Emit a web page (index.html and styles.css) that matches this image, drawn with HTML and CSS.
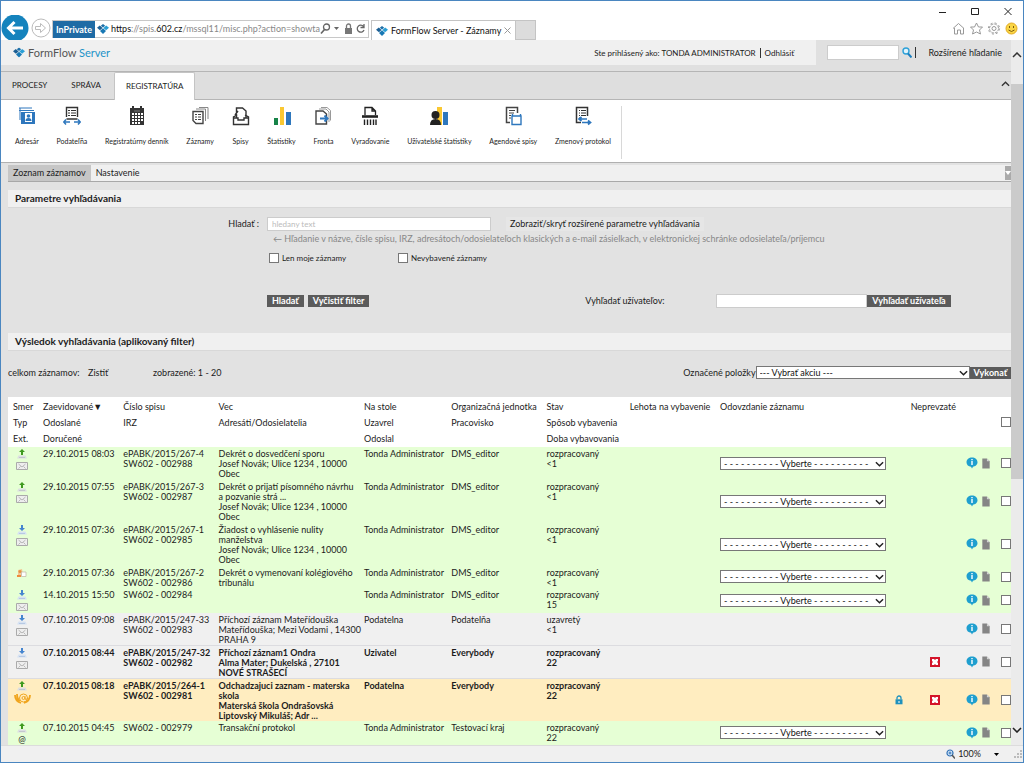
FILE: index.html
```html
<!DOCTYPE html>
<html lang="sk">
<head>
<meta charset="utf-8">
<title>FormFlow Server - Záznamy</title>
<link rel="stylesheet" href="styles.css">
</head>
<body>
<svg class="defs" aria-hidden="true">
  <symbol id="logo" viewBox="0 0 12 10"><path d="M6 0l2.200 1.800L6 3.600 3.800 1.800z" fill="#1d6fa8"/><path d="M2.800 1.600L5.600 4 2.900 6.200 0 3.800z" fill="#1c5f94"/><path d="M9.200 1.600L12 3.800 9.100 6.200 6.400 4z" fill="#2a9fd6"/><path d="M6 4.300l3 2.600L6 9.900 3 6.900z" fill="#1878b4"/></symbol>
  <symbol id="up" viewBox="0 0 10 10"><path d="M5 0l3 3H6v3H4V3H2z" fill="#3f9a1f"/><path d="M1.500 6.500h7L10 9.500H0z" fill="#dcdfe2"/><path d="M2 8.500h6" stroke="#b9bec4" stroke-width=".7"/></symbol>
  <symbol id="down" viewBox="0 0 10 10"><path d="M5 6L2 3h2V0h2v3h2z" fill="#4585cf"/><path d="M1.500 6.500h7L10 9.500H0z" fill="#d6e2f2"/><path d="M2 8.500h6" stroke="#a9bfdc" stroke-width=".7"/></symbol>
  <symbol id="mail" viewBox="0 0 12 10"><path d="M.5 1.500h11v7H.5z" fill="#eee" stroke="#aaa"/><path d="M2.500 3L6 6l3.500-3M2.500 7.500l2-2M9.500 7.500l-2-2" fill="none" stroke="#aaa" stroke-width=".8"/></symbol>
  <symbol id="bundle" viewBox="0 0 10 10"><path d="M1 2l4-1 1 6-5 1z" fill="#f3c795"/><circle cx="3" cy="3.500" r="1.500" fill="#e49443"/><path d="M4.500 4h4.500v4.500H4.500z" fill="#fff" stroke="#bdb3a5" stroke-width=".7"/><path d="M0 7h4v2H0z" fill="#ef8b3b"/></symbol>
  <symbol id="info" viewBox="0 0 12 12"><path d="M6 .5c3 0 5.500 2 5.500 4.700C11.500 8 9 9.500 7 9.700L6 11.500 5 9.700C2.500 9.500.5 8 .5 5.200.5 2.500 3 .5 6 .5z" fill="#1f9fcf"/><path d="M5.300 2h1.400v1.300H5.300zM5.300 4h1.400v4H5.300z" fill="#fff"/></symbol>
  <symbol id="doc" viewBox="0 0 8 12"><path d="M0 .5h5L8 3.500v8H0z" fill="#858585"/><path d="M5 .5L8 3.500H5z" fill="#d5d5d5"/></symbol>
  <symbol id="lock" viewBox="0 0 8 10"><path d="M2 4.500V3a2 2 0 014 0v1.500" fill="none" stroke="#1e91bd" stroke-width="1.300"/><path d="M.5 4.300h7v5h-7z" fill="#1e91bd"/><path d="M3.500 6h1v2h-1z" fill="#fff"/></symbol>
  <symbol id="cross" viewBox="0 0 10 10"><path d="M0 0h10v10H0z" fill="#d4142a"/><path d="M2 2h2l1 1 1-1h2v2L7 5l1 1v2H6L5 7 4 8H2V6l1-1-1-1z" fill="#fff"/></symbol>
  <symbol id="chev" viewBox="0 0 10 6"><path d="M1 1l4 4 4-4" fill="none" stroke="#222" stroke-width="1.600"/></symbol>
  <symbol id="chevup" viewBox="0 0 10 6"><path d="M1 5l4-4 4 4" fill="none" stroke="#333" stroke-width="1.500"/></symbol>
</svg>
<div class="window">
  <header class="chrome">
    <div class="nav">
      <button class="round" aria-label="Späť"><svg width="28" height="25" viewBox="0 0 28 25"><circle cx="14" cy="13" r="13.500" fill="#1583bd"/><path d="M22 13H8M13.500 7L7.500 13l6 6" fill="none" stroke="#fff" stroke-width="3"/></svg></button>
      <button class="round" aria-label="Vpred"><svg width="20" height="20" viewBox="0 0 20 20" fill="none" stroke="#bbb"><circle cx="10" cy="10" r="9"/><path d="M4.500 8.500h5v-3l5 4.500-5 4.500v-3h-5z"/></svg></button>
      <div class="address">
        <span class="private">InPrivate</span>
        <svg width="12" height="10"><use href="#logo"/></svg>
        <span class="url"><b>https</b>://spis.<b>602.cz</b>/mssql11/misc.php?action=showta</span>
        <svg width="46" height="12" viewBox="0 0 46 12" fill="none" stroke="#666"><circle cx="6.500" cy="4" r="3" stroke-width="1.300"/><path d="M4.500 6.500L1 10.500" stroke-width="1.600"/><path d="M14 4h5l-2.500 3z" fill="#666" stroke="none"/><path d="M25 5h7v6h-7z" fill="#777" stroke="none"/><path d="M26.500 5V3a2 2 0 014 0v2" stroke="#777" stroke-width="1.300"/><path d="M43.500 3.500A3.500 3.500 0 1044 7M44 1v3.500H40.500" stroke-width="1.300"/></svg>
      </div>
      <div class="tab"><svg width="12" height="10"><use href="#logo"/></svg><span>FormFlow Server - Záznamy</span><svg class="close" width="7" height="7" viewBox="0 0 7 7"><path d="M.5.5l6 6M6.500.5l-6 6" stroke="#999"/></svg></div>
      <button class="newtab" aria-label="Nová karta"></button>
    </div>
    <div class="wincontrols">
      <svg width="74" height="9" viewBox="0 0 74 9" fill="none" stroke="#222"><path d="M1 5.500h7M33.500 1.500h7v6h-7zM66.500 1l7 7M73.500 1l-7 7"/></svg>
      <svg width="66" height="13" viewBox="0 0 66 13" fill="none" stroke="#999"><path d="M1 6.500L6.500 1.500 12 6.500M2.500 6v6h3V8h3v4h3V6M18.500 5h4L24.500 1l2 4h4l-3 3 1 4-4-2-4 2 1-4z"/><circle cx="42" cy="6.500" r="4.500" stroke-dasharray="2.500 1"/><circle cx="42" cy="6.500" r="5.600" stroke-dasharray="2 2.400"/><circle cx="42" cy="6.500" r="2"/><circle cx="59.500" cy="6.500" r="5.500" fill="#f9d545" stroke="#e3aa22"/><path d="M57.500 4v2M61.500 4v2M56.500 8q3 3 6 0" stroke="#7a5a10"/></svg>
    </div>
  </header>
  <div class="viewport">
    <div class="page">
      <div class="brandbar">
        <div class="brand"><svg width="12" height="11" viewBox="0 0 12 10"><use href="#logo"/></svg><span>FormFlow <i>Server</i></span></div>
        <div class="user"><span>Ste prihlásený ako: TONDA ADMINISTRATOR</span><a href="#">Odhlásiť</a></div>
        <form class="quick"><input type="text" aria-label="Hľadať"><button type="button" aria-label="Hľadaj"><svg width="10" height="11" viewBox="0 0 10 11" fill="none"><circle cx="4" cy="4" r="3" fill="#e3f4fc" stroke="#2da1d8" stroke-width="1.400"/><path d="M6 6.500l3.500 4" stroke="#1c7fc0" stroke-width="2"/></svg></button><a href="#">Rozšírené hľadanie</a></form>
      </div>
      <nav class="tabs"><a href="#">PROCESY</a><a href="#">SPRÁVA</a><a href="#" class="active">REGISTRATÚRA</a><button aria-label="Zbaliť"><svg width="9" height="6"><use href="#chevup"/></svg></button></nav>
      <div class="ribbon">
        <div class="tools">
        <a href="#"><svg viewBox="0 0 18 20"><path d="M1 2h13M1 4.500h15M2 2v12" stroke="#2e77bd" fill="none"/><path d="M3 6h14v12H3z" fill="#2e77bd"/><path d="M7 7h7v9H7z" fill="#fff"/><circle cx="10.500" cy="10" r="1.800" fill="#2e77bd"/><path d="M7.500 15q0-3 3-3t3 3z" fill="#2e77bd"/></svg>Adresár</a>
        <a href="#"><svg viewBox="0 0 18 20" fill="none" stroke="#333"><path d="M3.500 11V1.500h11V11M3.500 13h11" stroke-width="1.400"/><path d="M5 4.500h2M8 4.500h5M5 7h2M8 7h5M5 9.500h2M8 9.500h5"/><path d="M1 16h6M11 16h6M3 13.500L.8 16 3 18.500M15 13.500l2.200 2.500L15 18.500" stroke="#2e77bd" stroke-width="1.500"/></svg>Podateľňa</a>
        <a href="#"><svg viewBox="0 0 18 20"><path d="M2 2h14v17H2z" fill="#333"/><path d="M4 7h2v2H4zM7 7h2v2H7zM10 7h2v2h-2zM13 7h2v2h-2zM4 10h2v2H4zM7 10h2v2H7zM10 10h2v2h-2zM13 10h2v2h-2zM4 13h2v2H4zM7 13h2v2H7zM10 13h2v2h-2zM13 13h2v2h-2zM4 16h2v2H4zM7 16h2v2H7zM10 16h2v2h-2z" fill="#fff"/><path d="M5 0v4M13 0v4" stroke="#333" stroke-width="2"/><path d="M6 5h6" stroke="#777"/></svg>Registratúrny denník</a>
        <a href="#"><svg viewBox="0 0 18 20" fill="none" stroke="#444"><path d="M2 5.500h10v12H5l-3-3z" stroke-width="1.400"/><path d="M5 3h9.500v12M8 1.500h9V13" stroke="#888"/><path d="M4 8.500h2M7 8.500h3M4 11h2M7 11h3M4 13.500h2M7 13.500h3"/></svg>Záznamy</a>
        <a href="#"><svg viewBox="0 0 18 20" fill="none" stroke="#333" stroke-width="1.400"><path d="M5 9L1.500 11v7.500h15V11L13 9"/><path d="M4.500 12V2h6L14 5v7M2 12h4v2h6v-2h4M6 5l-3 4"/></svg>Spisy</a>
        <a href="#"><svg viewBox="0 0 18 20"><path d="M1 12h4v7H1z" fill="#178348"/><path d="M7 1h4v18H7z" fill="#fac832"/><path d="M13 6h5v13h-5z" fill="#2e77bd"/></svg>Štatistiky</a>
        <a href="#"><svg viewBox="0 0 18 20" fill="none" stroke="#444"><path d="M7 1.500h6l3.500 3v10M5 3h7l3 3v10" stroke="#999"/><path d="M2 5h7l3.500 3v10H2z" fill="#fff" stroke-width="1.400"/><path d="M6 12.500h7M10.500 9.500l3 3-3 3" stroke="#2e77bd" stroke-width="2"/></svg>Fronta</a>
        <a href="#"><svg viewBox="0 0 18 20" fill="none" stroke="#222"><path d="M4 9V1.500h7L14.500 5v4M11 1.500V5h3" stroke-width="1.300"/><path d="M1 10.500h16" stroke-width="2.600"/><path d="M3.500 13.500V19M6.500 13.500V19M9.500 13.500V19M12.500 13.500V19M15 13.500V19" stroke-width="1.400"/></svg>Vyraďovanie</a>
        <a href="#"><svg viewBox="0 0 18 20"><path d="M7 1h5v18H7z" fill="#fac832"/><path d="M13 6h5v13h-5z" fill="#2e77bd"/><circle cx="5.500" cy="9" r="4" fill="#222"/><path d="M0 19q0-6 5.500-6T11 19z" fill="#222"/></svg>Užívatelské štatistiky</a>
        <a href="#"><svg viewBox="0 0 18 20" fill="none" stroke="#444"><path d="M6 16.500H2.500V1.500h11V7" stroke-width="1.500"/><path d="M5 4.500h6M5 7h5M5 9.500h2M5 12h2"/><path d="M8 10h9v8.500H8zM8.500 8v2M16.500 8v2" fill="#fff" stroke="#2e77bd" stroke-width="1.400"/></svg>Agendové spisy</a>
        <a href="#"><svg viewBox="0 0 18 20" fill="none" stroke="#333"><path d="M7 16.500H2.500V1.500h11V10" stroke-width="1.500"/><path d="M5 4.500h1M7 4.500h5M5 7h1M7 7h5M5 9.500h1M7 9.500h5M5 12h1"/><path d="M5 13h8M8 16.500h8M7.500 11L5 13l2.500 2M14 14.500l2.500 2-2.500 2" stroke="#2e77bd" stroke-width="1.700"/></svg>Zmenový protokol</a>
        </div>
      </div>
      <main class="content">
        <nav class="subtabs"><a href="#" class="active">Zoznam záznamov</a><a href="#">Nastavenie</a><button aria-label="Ponuka"><svg width="6" height="14" viewBox="0 0 6 14"><path d="M0 0h6v14H0z" fill="#aaa"/><path d="M0 5h6l-3 4z" fill="#fff"/></svg></button></nav>
        <h2>Parametre vyhľadávania</h2>
        <form class="search">
          <div class="line"><label class="name" for="q">Hladať :</label><input id="q" class="query" type="text" placeholder="hledany text"><button type="button" class="plain">Zobraziť/skryť rozšírené parametre vyhľadávania</button></div>
          <p class="hint">← Hľadanie v názve, čísle spisu, IRZ, adresátoch/odosielateľoch klasických a e-mail zásielkach, v elektronickej schránke odosielateľa/príjemcu</p>
          <div class="checks"><label><input type="checkbox">Len moje záznamy</label><label><input type="checkbox">Nevybavené záznamy</label></div>
          <div class="actions"><button type="button" class="dark">Hladať</button><button type="button" class="dark">Vyčistiť filter</button><label for="u">Vyhľadať užívateľov:</label><input id="u" type="text"><button type="button" class="dark">Vyhľadať užívateľa</button></div>
        </form>
        <h2>Výsledok vyhľadávania (aplikovaný filter)</h2>
        <div class="summary"><span class="total">celkom záznamov:</span><a href="#">Zistiť</a><span class="shown">zobrazené: 1 - 20</span><label for="act">Označené položky</label><span class="pick wide"><select id="act"><option>--- Vybrať akciu ---</option></select><svg width="9" height="6"><use href="#chev"/></svg></span><button type="button" class="dark">Vykonať</button></div>
        <table>
          <colgroup><col class="c1"><col class="c2"><col class="c3"><col class="c4"><col class="c5"><col class="c6"><col class="c7"><col class="c8"><col class="c9"><col class="c10"><col class="c11"><col class="c12"><col class="c13"></colgroup>
          <thead><tr><th>Smer<br>Typ<br>Ext.</th><th>Zaevidované▼<br>Odoslané<br>Doručené</th><th>Číslo spisu<br>IRZ</th><th>Vec<br>Adresáti/Odosielatelia</th><th>Na stole<br>Uzavrel<br>Odoslal</th><th>Organizačná jednotka<br>Pracovisko</th><th>Stav<br>Spôsob vybavenia<br>Doba vybavovania</th><th>Lehota na vybavenie</th><th>Odovzdanie záznamu</th><th></th><th>Neprevzaté</th><th></th><th class="mid box"><input type="checkbox" aria-label="Označiť všetko"></th></tr></thead>
          <tbody>
          <tr class="green"><td class="ic"><svg><use href="#up"/></svg><svg><use href="#mail"/></svg></td><td>29.10.2015 08:03</td><td>ePABK/2015/267-4<br>SW602 - 002988</td><td>Dekrét o dosvedčení sporu<br>Josef Novák; Ulice 1234 , 10000<br>Obec</td><td>Tonda Administrator</td><td>DMS_editor</td><td>rozpracovaný<br>&lt;1</td><td></td><td class="mid"><span class="pick"><select aria-label="Odovzdanie"><option>- - - - - - - - - - Vyberte - - - - - - - - - -</option></select><svg width="9" height="6"><use href="#chev"/></svg></span></td><td></td><td></td><td class="mid"><svg class="info"><use href="#info"/></svg><svg class="doc"><use href="#doc"/></svg></td><td class="mid box"><input type="checkbox" aria-label="Označiť"></td></tr>
          <tr class="green"><td class="ic"><svg><use href="#up"/></svg><svg><use href="#mail"/></svg></td><td>29.10.2015 07:55</td><td>ePABK/2015/267-3<br>SW602 - 002987</td><td>Dekrét o prijatí písomného návrhu<br>a pozvanie strá ...<br>Josef Novák; Ulice 1234 , 10000<br>Obec</td><td>Tonda Administrator</td><td>DMS_editor</td><td>rozpracovaný<br>&lt;1</td><td></td><td class="mid"><span class="pick"><select aria-label="Odovzdanie"><option>- - - - - - - - - - Vyberte - - - - - - - - - -</option></select><svg width="9" height="6"><use href="#chev"/></svg></span></td><td></td><td></td><td class="mid"><svg class="info"><use href="#info"/></svg><svg class="doc"><use href="#doc"/></svg></td><td class="mid box"><input type="checkbox" aria-label="Označiť"></td></tr>
          <tr class="green"><td class="ic"><svg><use href="#down"/></svg><svg><use href="#mail"/></svg></td><td>29.10.2015 07:36</td><td>ePABK/2015/267-1<br>SW602 - 002985</td><td>Žiadost o vyhlásenie nulity<br>manželstva<br>Josef Novák; Ulice 1234 , 10000<br>Obec</td><td>Tonda Administrator</td><td>DMS_editor</td><td>rozpracovaný<br>&lt;1</td><td></td><td class="mid"><span class="pick"><select aria-label="Odovzdanie"><option>- - - - - - - - - - Vyberte - - - - - - - - - -</option></select><svg width="9" height="6"><use href="#chev"/></svg></span></td><td></td><td></td><td class="mid"><svg class="info"><use href="#info"/></svg><svg class="doc"><use href="#doc"/></svg></td><td class="mid box"><input type="checkbox" aria-label="Označiť"></td></tr>
          <tr class="green tight"><td class="ic"><svg><use href="#bundle"/></svg></td><td>29.10.2015 07:36</td><td>ePABK/2015/267-2<br>SW602 - 002986</td><td>Dekrét o vymenovaní kolégiového<br>tribunálu</td><td>Tonda Administrator</td><td>DMS_editor</td><td>rozpracovaný<br>&lt;1</td><td></td><td class="mid"><span class="pick"><select aria-label="Odovzdanie"><option>- - - - - - - - - - Vyberte - - - - - - - - - -</option></select><svg width="9" height="6"><use href="#chev"/></svg></span></td><td></td><td></td><td class="mid"><svg class="info"><use href="#info"/></svg><svg class="doc"><use href="#doc"/></svg></td><td class="mid box"><input type="checkbox" aria-label="Označiť"></td></tr>
          <tr class="green"><td class="ic"><svg><use href="#down"/></svg><svg><use href="#mail"/></svg></td><td>14.10.2015 15:50</td><td>SW602 - 002984</td><td></td><td>Tonda Administrator</td><td>DMS_editor</td><td>rozpracovaný<br>15</td><td></td><td class="mid"><span class="pick"><select aria-label="Odovzdanie"><option>- - - - - - - - - - Vyberte - - - - - - - - - -</option></select><svg width="9" height="6"><use href="#chev"/></svg></span></td><td></td><td></td><td class="mid"><svg class="info"><use href="#info"/></svg><svg class="doc"><use href="#doc"/></svg></td><td class="mid box"><input type="checkbox" aria-label="Označiť"></td></tr>
          <tr class="grey tight"><td class="ic"><svg><use href="#down"/></svg><svg><use href="#mail"/></svg></td><td>07.10.2015 09:08</td><td>ePABK/2015/247-33<br>SW602 - 002983</td><td>Příchozí záznam Mateřídouška<br>Mateřídouška; Mezi Vodami , 14300<br>PRAHA 9</td><td>Podatelna</td><td>Podatelňa</td><td>uzavretý<br>&lt;1</td><td></td><td></td><td></td><td></td><td class="mid"><svg class="info"><use href="#info"/></svg><svg class="doc"><use href="#doc"/></svg></td><td class="mid box"><input type="checkbox" aria-label="Označiť"></td></tr>
          <tr class="grey tight unread"><td class="ic"><svg><use href="#down"/></svg><svg><use href="#mail"/></svg></td><td>07.10.2015 08:44</td><td>ePABK/2015/247-32<br>SW602 - 002982</td><td>Příchozí záznam1 Ondra<br>Alma Mater; Dukelská , 27101<br>NOVÉ STRAŠECÍ</td><td>Uzivatel</td><td>Everybody</td><td>rozpracovaný<br>22</td><td></td><td></td><td></td><td class="mid flag"><svg width="10" height="10"><use href="#cross"/></svg></td><td class="mid"><svg class="info"><use href="#info"/></svg><svg class="doc"><use href="#doc"/></svg></td><td class="mid box"><input type="checkbox" aria-label="Označiť"></td></tr>
          <tr class="amber tight unread"><td class="ic wideicon"><svg><use href="#up"/></svg><svg class="post" viewBox="0 0 17 11" fill="none" stroke="#f0a51e"><path d="M1 2q0 6 6 8M16 2q0 6-6 8M3 1q0 5 3 7" stroke-width="1.800"/><circle cx="9.500" cy="5" r="4"/><circle cx="9.500" cy="5" r="1.500"/><path d="M11 3v3q1.500 1.500 2.500-1"/></svg></td><td>07.10.2015 08:18</td><td>ePABK/2015/264-1<br>SW602 - 002981</td><td>Odchadzajuci zaznam - materska<br>skola<br>Materská škola Ondrašovská<br>Liptovský Mikuláš; Adr ...</td><td>Podatelna</td><td>Everybody</td><td>rozpracovaný<br>22</td><td></td><td></td><td class="mid secured"><svg width="8" height="10"><use href="#lock"/></svg></td><td class="mid flag"><svg width="10" height="10"><use href="#cross"/></svg></td><td class="mid"><svg class="info"><use href="#info"/></svg><svg class="doc"><use href="#doc"/></svg></td><td class="mid box"><input type="checkbox" aria-label="Označiť"></td></tr>
          <tr class="green"><td class="ic"><svg><use href="#up"/></svg><span class="at">@</span></td><td>07.10.2015 04:45</td><td>SW602 - 002979</td><td>Transakční protokol</td><td>Tonda Administrator</td><td>Testovací kraj</td><td>rozpracovaný<br>22</td><td></td><td class="mid"><span class="pick"><select aria-label="Odovzdanie"><option>- - - - - - - - - - Vyberte - - - - - - - - - -</option></select><svg width="9" height="6"><use href="#chev"/></svg></span></td><td></td><td></td><td class="mid"><svg class="info"><use href="#info"/></svg><svg class="doc"><use href="#doc"/></svg></td><td class="mid box"><input type="checkbox" aria-label="Označiť"></td></tr>
          </tbody>
        </table>
      </main>
    </div>
    <div class="scroll"><svg width="10" height="6"><use href="#chevup"/></svg><div class="thumb"></div><svg width="10" height="6"><use href="#chev"/></svg></div>
  </div>
  <footer class="status"><svg width="9" height="10" viewBox="0 0 9 10" fill="none"><circle cx="4" cy="4" r="3" fill="#dcebfa" stroke="#2f70b5" stroke-width="1.200"/><path d="M2.500 4h3M4 2.500v3" stroke="#2f70b5"/><path d="M6 6l3 3.500" stroke="#555" stroke-width="1.500"/></svg><span>100%</span><svg class="drop" width="5" height="3" viewBox="0 0 5 3"><path d="M0 0h5L2.500 3z"/></svg><svg width="8" height="8" viewBox="0 0 8 8"><path d="M6 0h2v2H6zM6 3h2v2H6zM3 3h2v2H3zM6 6h2v2H6zM3 6h2v2H3zM0 6h2v2H0z" fill="#bbb"/></svg></footer>
</div>
</body>
</html>
```
FILE: styles.css
```css
* { box-sizing: border-box; }
body { margin: 0; font: 9px/10px Lato, "Open Sans", sans-serif; color: #1c1c1c; background: #fff; }
a { color: inherit; text-decoration: none; }
button { border: 0; padding: 0; background: none; font: inherit; color: inherit; }
input, select { font: inherit; margin: 0; }
svg { flex: none; display: block; }
.defs { position: absolute; width: 0; height: 0; }
.window { display: flex; flex-direction: column; height: 100vh; border: 1px solid #4a86c0; overflow: hidden; }

.chrome { display: flex; justify-content: space-between; height: 39px; flex: none; background: #fff; }
.nav { display: flex; align-items: flex-end; }
.round:first-child { margin-right: 2px; }
.round { margin: 0 1px 0 0; }
.round + .round { padding-bottom: 2px; }
.address { display: flex; align-items: center; width: 317px; height: 18px; margin: 0 2px 2px 0; padding-right: 2px; border: 1px solid #c8c8c8; white-space: nowrap; }
.private { background: #1f6ba5; color: #fff; font-weight: bold; line-height: 17px; padding: 0 3px; margin-right: 2px; }
.url { flex: 1; margin-left: 2px; color: #888; }
.url b { font-weight: normal; color: #111; }
.tab { display: flex; align-items: center; gap: 3px; width: 145px; height: 20px; padding: 0 4px; border: 1px solid #c4c4c4; border-bottom: 0; color: #111; white-space: nowrap; }
.tab span { flex: 1; }
.newtab { width: 20px; height: 20px; background: #dcdcdc; border: 1px solid #c4c4c4; border-left: 0; }
.wincontrols { display: flex; flex-direction: column; align-items: flex-end; gap: 6px; padding: 6px 5px 0 0; }
.wincontrols svg:first-child { margin-right: 6px; }

.viewport { display: flex; flex: 1; min-height: 0; overflow: hidden; }
.page { flex: 1; min-width: 0; background: #e2e2e2; }
.scroll { display: flex; flex-direction: column; align-items: center; width: 12px; flex: none; padding: 12px 0; background: #ebebeb; }
.scroll .thumb { width: 12px; flex: none; height: 58%; margin: 26px 0 auto; background: #cbcbcb; }

.brandbar { display: flex; height: 31px; padding-bottom: 6px; background: #e0e0e0; }
.brand { display: flex; align-items: center; gap: 3px; flex: 1; padding-left: 12px; background: #f0f0f0; font-size: 11px; color: #555; }
.brand i { font-style: normal; color: #1d93c8; }
.user { display: flex; align-items: center; padding-right: 22px; background: #f0f0f0; font-size: 8px; }
.user span { padding-right: 4px; border-right: 1px solid #333; margin-right: 4px; }
.quick { display: flex; align-items: center; width: 195px; padding: 0 9px 0 11px; }
.quick input { width: 72px; height: 15px; border: 1px solid #ccc; background: #fff; }
.quick button { padding: 0 3px; border-right: 1px solid #333; }
.quick a { margin-left: auto; white-space: nowrap; }
.tabs { display: flex; align-items: flex-end; height: 29px; border: solid #b5b5b5; border-width: 1px 0; background: #dedede; font-size: 8px; }
.tabs a { padding: 0 11px; line-height: 27px; margin-right: 2px; }
.tabs .active { position: relative; bottom: -1px; background: #fff; border: 1px solid #c4c4c4; border-bottom: 0; border-radius: 2px 2px 0 0; }
.tabs button { margin: 0 1px 12px auto; }
.ribbon { height: 63px; padding: 6px 0 3px; background: #fff; border-bottom: 1px solid #b0b0b0; }
.tools { display: flex; width: 621px; height: 100%; padding: 0 10px 0 14px; justify-content: space-between; border-right: 1px solid #d8d8d8; font-size: 7px; white-space: nowrap; }
.tools a { display: flex; flex-direction: column; align-items: center; gap: 10px; }
.tools svg { width: 18px; height: 20px; }

.content { padding: 2px 0 0 7px; }
.subtabs { display: flex; height: 17px; background: #f0f0f0; border-bottom: 1px solid #a8a8a8; }
.subtabs a { padding: 0 5px; line-height: 16px; }
.subtabs .active { background: #c6c6c6; }
.subtabs button { margin-left: auto; }
h2 { margin: 8px 0 0; padding: 0 7px; font-size: 10px; line-height: 17px; background: #f0f0f0; border-bottom: 1px solid #d8d8d8; }
.search { padding-top: 9px; height: 117px; }
.line, .checks, .actions, .summary { display: flex; align-items: center; }
.name { width: 259px; padding-right: 8px; text-align: right; }
.search input[type="text"] { height: 14px; border: 1px solid #ccc; background: #fff; padding: 0 4px; }
.search .query { width: 224px; font-size: 8px; }
::placeholder { color: #bbb; }
.plain { margin-left: 15px; padding: 0 4px; line-height: 14px; background: #e6e6e6; }
.hint { margin: 3px 0 9px 265px; color: #888; white-space: nowrap; }
.checks { padding-left: 261px; font-size: 8px; }
.checks label { display: flex; align-items: center; gap: 3px; width: 129px; white-space: nowrap; }
input[type="checkbox"] { appearance: none; width: 10px; height: 10px; border: 1px solid #777; background: #fff; display: block; }
.actions { margin-top: 31px; padding-left: 259px; }
.dark { background: #5b5b5b; color: #fff; font-weight: bold; line-height: 12px; padding: 0 5px; white-space: nowrap; }
.actions .dark + .dark { margin-left: 4px; }
.actions label { margin-left: 216px; width: 131px; }
.actions #u { width: 151px; }
.summary { padding: 15px 0 18px; }
.total { width: 80px; }
.summary a { width: 65px; }
.summary label { margin-left: auto; }
.summary .dark { padding: 0 4px; }
.pick { position: relative; display: block; width: 166px; }
.pick.wide { width: 214px; }
.pick select { display: block; appearance: none; width: 100%; height: 13px; padding: 0 3px; line-height: 11px; border: 1px solid #777; border-radius: 0; background: #fff; color: #111; }
.pick svg { position: absolute; right: 2px; top: 4px; pointer-events: none; }

table { width: 100%; table-layout: fixed; border-collapse: collapse; white-space: nowrap; }
.c1 { width: 3%; } .c2 { width: 8%; } .c3 { width: 9.5%; } .c4 { width: 14.5%; } .c5 { width: 8.7%; }
.c6 { width: 9.5%; } .c7 { width: 8.3%; } .c8 { width: 9%; } .c9 { width: 17%; }
.c10 { width: 2%; } .c11 { width: 5.5%; } .c12 { width: 3.9%; } .c13 { width: 1.1%; }
th { padding: 2px 0 0 5px; text-align: left; font-weight: normal; line-height: 16px; vertical-align: top; background: #fff; }
td { padding: 2px 0 1px 5px; vertical-align: top; }
.green { background: #e6ffd5; }
.grey { background: #f0f0f0; border-bottom: 1px solid #dcdce0; }
.tight td { padding-bottom: 0; }
.amber { background: #ffedc0; }
.unread { font-weight: bold; }
td.mid, th.mid { vertical-align: middle; padding-top: 0; padding-bottom: 1px; }
.mid svg { display: inline-block; vertical-align: middle; }
.mid .pick svg { display: block; }
.box { padding-left: 1px; }
.flag { padding-left: 24px; }
.secured { padding-left: 9px; }
.info { width: 12px; height: 12px; margin-right: 4px; }
.doc { width: 8px; height: 11px; }
td.ic { padding-left: 8px; }
td.wideicon { padding-left: 6px; }
.ic svg { width: 12px; height: 10px; margin-bottom: 2px; }
.ic svg:last-child { margin-bottom: 0; }
.wideicon svg:first-child { margin-left: 2px; }
.ic svg.post { width: 17px; height: 11px; }
.at { display: block; width: 12px; text-align: center; font-size: 9px; line-height: 9px; }

.status { display: flex; align-items: center; justify-content: flex-end; gap: 3px; height: 17px; flex: none; background: #f0f0f0; border-top: 1px solid #dcdcdc; padding-right: 1px; }
.drop { margin: 0 12px 0 10px; }
```
